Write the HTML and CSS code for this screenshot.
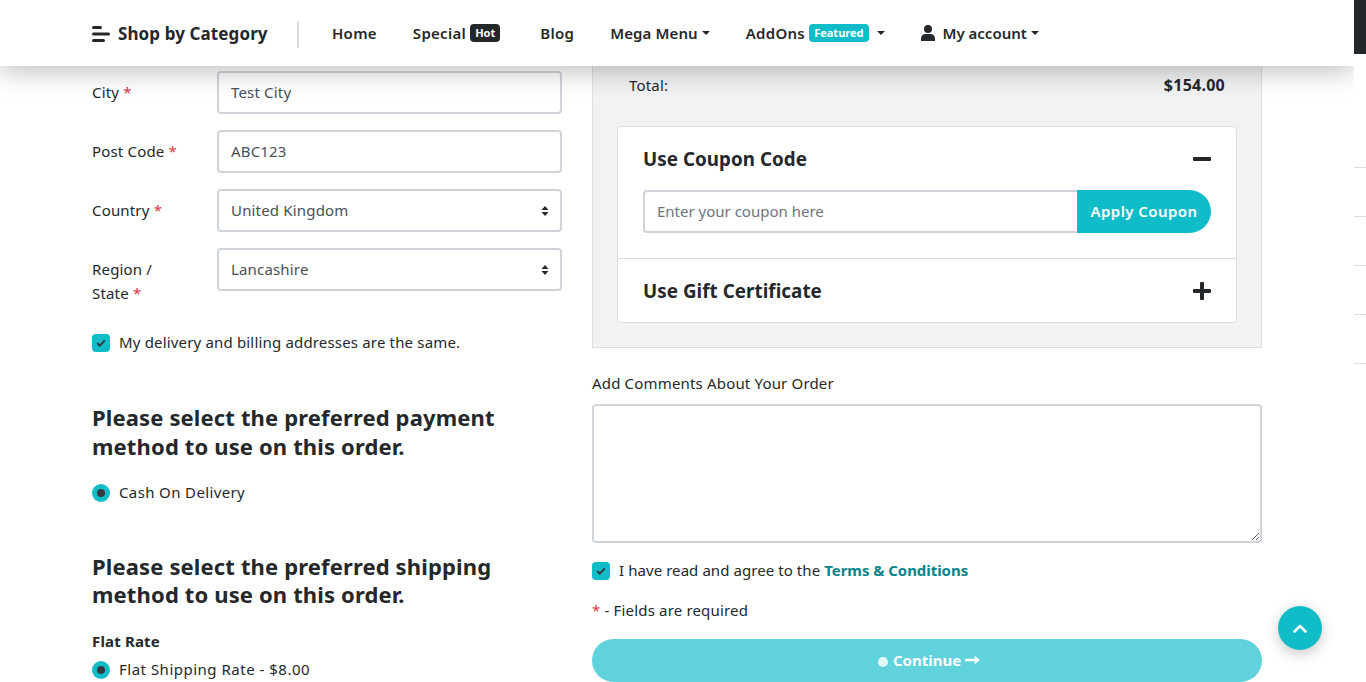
FILE: index.html
```html
<!DOCTYPE html>
<html lang="en">
<head>
<meta charset="utf-8">
<title>Checkout</title>
<link rel="stylesheet" href="styles.css">
</head>
<body>
<div class="page">
  <div class="main">
    <header class="topbar">
      <a class="cat"><svg class="cat-ic" width="18" height="16" viewBox="0 0 18 16"><rect x="0" y="0" width="10" height="3" rx="1.5"/><rect x="0" y="6.5" width="18" height="3" rx="1.5"/><rect x="0" y="13" width="13" height="3" rx="1.5"/></svg>Shop by Category</a>
      <span class="divider"></span>
      <nav class="nav">
        <a class="nav-item">Home</a>
        <a class="nav-item w-special">Special <span class="badge dark">Hot</span></a>
        <a class="nav-item w-blog">Blog</a>
        <a class="nav-item w-mega">Mega Menu<i class="caret"></i></a>
        <a class="nav-item">AddOns <span class="badge teal">Featured</span><i class="caret far"></i></a>
        <a class="nav-item w-acct"><svg class="user" width="14" height="16" viewBox="0 0 14 16"><circle cx="7" cy="4" r="4"/><path d="M0 16v-2.600C0 11 2 9 4.500 9h5C12 9 14 11 14 13.400V16z"/></svg>My account<i class="caret"></i></a>
      </nav>
    </header>
    <main class="content">
      <section class="left">
        <div class="row"><label class="lab">City <b>*</b></label><div class="field">Test City</div></div>
        <div class="row"><label class="lab">Post Code <b>*</b></label><div class="field">ABC123</div></div>
        <div class="row"><label class="lab">Country <b>*</b></label><div class="field sel">United Kingdom<svg class="updown" width="8" height="12" viewBox="0 0 8 12"><path d="M4 1l3.500 4H.5zM4 11L.5 7h7z"/></svg></div></div>
        <div class="row"><label class="lab">Region /<br>State <b>*</b></label><div class="field sel">Lancashire<svg class="updown" width="8" height="12" viewBox="0 0 8 12"><path d="M4 1l3.500 4H.5zM4 11L.5 7h7z"/></svg></div></div>
        <div class="check same"><span class="box"><svg width="10" height="8" viewBox="0 0 10 8"><path d="M1.200 4l2.600 2.600L8.800 1.400" fill="none" stroke="#343a40" stroke-width="2"/></svg></span>My delivery and billing addresses are the same.</div>
        <h2 class="h-pay">Please select the preferred payment method to use on this order.</h2>
        <div class="check cod"><span class="radio"></span>Cash On Delivery</div>
        <h2 class="h-ship">Please select the preferred shipping method to use on this order.</h2>
        <div class="flat">Flat Rate</div>
        <div class="check rate"><span class="radio"></span>Flat Shipping Rate - $8.00</div>
      </section>
      <section class="right">
        <div class="panel">
          <div class="total"><span>Total:</span><strong>$154.00</strong></div>
          <div class="acc">
            <div class="acc-item open">
              <div class="acc-head"><span>Use Coupon Code</span><svg class="sign" width="18" height="18" viewBox="0 0 18 18"><rect y="7" width="18" height="4" rx="1"/></svg></div>
              <div class="coupon"><div class="coupon-in">Enter your coupon here</div><a class="coupon-btn">Apply Coupon</a></div>
            </div>
            <div class="acc-item">
              <div class="acc-head"><span>Use Gift Certificate</span><svg class="sign" width="18" height="18" viewBox="0 0 18 18"><rect y="7" width="18" height="4" rx="1"/><rect x="7" width="4" height="18" rx="1"/></svg></div>
            </div>
          </div>
        </div>
        <div class="cmt-label">Add Comments About Your Order</div>
        <textarea class="cmt"></textarea>
        <div class="check agree"><span class="box"><svg width="10" height="8" viewBox="0 0 10 8"><path d="M1.200 4l2.600 2.600L8.800 1.400" fill="none" stroke="#343a40" stroke-width="2"/></svg></span>I have read and agree to the&nbsp;<a class="terms">Terms &amp; Conditions</a></div>
        <p class="req"><b>*</b> - Fields are required</p>
        <a class="continue"><i class="dot"></i>Continue<svg class="arrow" width="15" height="10" viewBox="0 0 14 10" preserveAspectRatio="none"><path d="M0 3.800h9V.8L14 5 9 9.200v-3H0z"/></svg></a>
      </section>
    </main>
  </div>
  <aside class="strip">
    <div class="strip-top"></div>
    <div class="strip-lines"><span></span><span></span><span></span><span></span><span></span></div>
  </aside>
</div>
<a class="totop"><svg width="14" height="9" viewBox="0 0 14 9"><path d="M1.500 7.500L7 2l5.500 5.500" fill="none" stroke="#fff" stroke-width="2.500" stroke-linecap="round" stroke-linejoin="round"/></svg></a>
</body>
</html>
```
FILE: styles.css
```css
* { box-sizing: border-box; }
html, body { margin: 0; height: 682px; overflow: hidden; background: #fff; }
body { font-family: "Noto Sans", "Open Sans", sans-serif; font-size: 15px; line-height: 24px; letter-spacing: .17px; color: #25282b; }
.page { display: flex; height: 682px; overflow: hidden; }
.main { width: 1354px; flex: none; position: relative; overflow: hidden; }
.topbar { height: 66px; background: #fff; display: flex; align-items: center; padding-left: 92px; position: relative; z-index: 2; box-shadow: 0 4px 28px rgba(0,0,0,.28); font-weight: 600; }
.cat { display: flex; align-items: center; font-size: 17px; font-weight: 700; width: 205px; padding-top: 2px; letter-spacing: .1px; }
.cat-ic { fill: #25282b; margin-right: 8px; }
.divider { width: 2px; height: 27px; margin-top: 2px; background: #d9dbdd; margin-right: 33px; }
.nav { display: flex; align-items: center; font-size: 15px; letter-spacing: .27px; }
.nav-item { display: flex; align-items: center; white-space: pre; margin-right: 36px; }
.w-special { margin-right: 40px; }
.w-blog { letter-spacing: .3px; }
.w-mega { letter-spacing: .1px; }
.w-acct { letter-spacing: 0; }
.badge { font-size: 11px; line-height: 18px; height: 18px; border-radius: 4px; padding: 0 5px; font-weight: 700; letter-spacing: 0; }
.badge.dark { background: #25282b; color: #fff; }
.badge.teal { background: #10bcc8; color: #fff; }
.caret { display: inline-block; margin-left: 4px; border-top: 4px solid #25282b; border-left: 4px solid transparent; border-right: 4px solid transparent; }
.caret.far { margin-left: 8px; }
.user { fill: #25282b; margin-right: 8px; }
.content { display: flex; gap: 30px; padding-left: 92px; }
.left { width: 470px; padding-top: 5px; }
.right { width: 670px; }
.row { display: flex; margin-bottom: 16px; min-height: 43px; }
.lab { width: 125px; padding-top: 9px; }
.lab b, .req b { color: #dc3545; font-weight: 400; }
.field { flex: 1; height: 43px; border: 2px solid #ced4da; border-radius: 4px; padding: 0 12px 2px; display: flex; align-items: center; justify-content: space-between; color: #495057; }
.updown { fill: #25282b; margin: 2px -1px 0 0; }
.check { display: flex; align-items: center; height: 24px; padding-bottom: 2px; }
.same { margin-top: 26px; }
.box { width: 18px; height: 18px; background: #10bcc8; border-radius: 4px; margin: 2px 9px 0 0; display: flex; align-items: center; justify-content: center; }
.radio { width: 18px; height: 18px; border-radius: 50%; background: #10bcc8; margin: 2px 9px 0 0; display: flex; align-items: center; justify-content: center; }
.radio::after { content: ""; width: 8px; height: 8px; border-radius: 50%; background: #343a40; }
h2 { margin: 0; font-size: 22px; line-height: 28.8px; font-weight: 700; letter-spacing: .14px; }
.h-pay { margin-top: 48px; }
.cod { margin-top: 20px; letter-spacing: .37px; }
.h-ship { margin-top: 47px; }
.flat { margin-top: 20px; font-weight: 700; }
.rate { margin-top: 5px; letter-spacing: .5px; }
.panel { background: #f1f2f4; border: 1px solid #dcdee0; border-top: 0; height: 282px; padding: 7px 36px 0 24px; }
.total { display: flex; justify-content: space-between; align-items: center; padding: 0 0 0 12px; height: 24px; }
.total strong { font-weight: 700; font-size: 16px; letter-spacing: .25px; }
.acc { margin: 29px -12px 0 0; background: #fff; border: 1px solid #dcdee0; border-radius: 4px; width: 620px; }
.acc-item + .acc-item { border-top: 1px solid #dcdee0; }
.acc-head { display: flex; justify-content: space-between; align-items: center; padding: 0 25px; height: 63px; font-size: 18.8px; font-weight: 700; letter-spacing: .05px; }
.sign { fill: #25282b; }
.coupon { display: flex; padding: 0 25px 25px; }
.coupon-in { flex: 1; height: 43px; border: 2px solid #ced4da; border-right: 0; border-radius: 4px 0 0 4px; padding: 0 12px 1px; display: flex; align-items: center; color: #6c757d; letter-spacing: 0; }
.coupon-btn { width: 134px; height: 43px; padding-bottom: 1px; background: #10bcc8; color: #fff; font-weight: 600; letter-spacing: .42px; display: flex; align-items: center; justify-content: center; border-radius: 0 22px 22px 0; }
.cmt-label { margin-top: 23px; height: 24px; }
.cmt { display: block; width: 100%; height: 139px; margin-top: 9px; border: 2px solid #ced4da; border-radius: 4px; background: #fff; outline: 0; }
.agree { margin-top: 16px; letter-spacing: .07px; }
.terms { color: #07838c; font-weight: 700; letter-spacing: -.05px; }
.req { margin: 15px 0 0; height: 25px; }
.continue { margin-top: 16px; height: 43px; padding: 0 0 2px 4px; border-radius: 22px; background: #60d2db; color: #fff; font-weight: 700; letter-spacing: 0; display: flex; align-items: center; justify-content: center; }
.dot { width: 10px; height: 10px; background: #e3f7f8; border-radius: 50%; margin: 4px 5px 0 0; }
.arrow { fill: #fff; margin-left: 4px; }
.strip { width: 12px; flex: none; }
.strip-top { height: 54px; background: #25282b; }
.strip-lines { padding-top: 113px; }
.strip-lines span { display: block; height: 1px; background: #dcdee0; margin-bottom: 48px; }
.totop { position: fixed; left: 1278px; top: 606px; width: 44px; height: 44px; border-radius: 50%; background: #10bcc8; display: flex; align-items: center; justify-content: center; box-shadow: 0 4px 14px rgba(0,0,0,.22); z-index: 3; }
```
